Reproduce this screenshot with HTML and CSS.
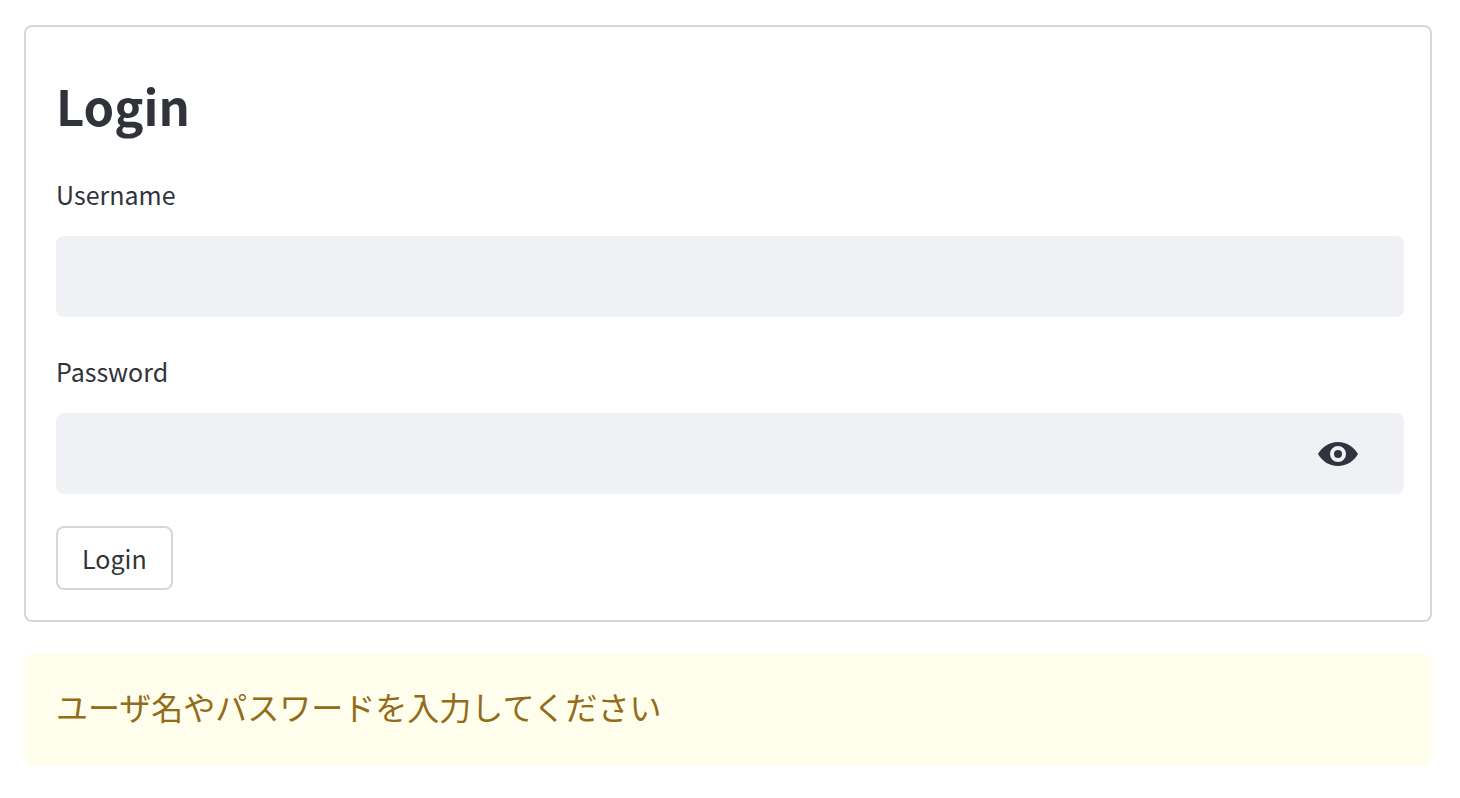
FILE: index.html
```html
<!DOCTYPE html>
<html lang="ja">
<head>
    <meta charset="UTF-8">
    <meta name="viewport" content="width=device-width, initial-scale=1.0">
    <title>Login</title>
    <link rel="stylesheet" href="styles.css">
</head>
<body>
    <main class="page">
        <form class="login">
            <h1 class="title">Login</h1>

            <label class="label" for="username">Username</label>
            <div class="field">
                <input type="text" id="username" name="username" autocomplete="username">
            </div>

            <label class="label" for="password">Password</label>
            <div class="field">
                <input type="password" id="password" name="password" autocomplete="current-password">
                <button type="button" class="eye" id="eye" aria-label="Show password">
                    <svg viewBox="0 0 40 24" width="40" height="24" aria-hidden="true">
                        <path fill="currentColor" fill-rule="evenodd" d="M20 0C11 0 4 5 0 12c4 7 11 12 20 12s16-5 20-12C36 5 29 0 20 0zm0 20a8 8 0 1 1 0-16 8 8 0 0 1 0 16z"/>
                        <circle fill="currentColor" cx="20" cy="12" r="4"/>
                    </svg>
                </button>
            </div>

            <button type="submit" class="submit">Login</button>
        </form>

        <div class="alert" role="alert">
            <p>ユーザ名やパスワードを入力してください</p>
        </div>
    </main>

    <script>
        var password = document.getElementById('password')
        var eye = document.getElementById('eye')

        // toggle the password between hidden and plain text
        eye.onclick = function(){
            password.type = password.type === 'password' ? 'text' : 'password'
        }
    </script>
</body>
</html>
```
FILE: styles.css
```css
*{
    padding: 0;
    margin: 0;
    box-sizing: border-box;
}
body{
    background-color: #fff;
    color: #31333b;
    font-family: "Noto Sans CJK JP", "Noto Sans", sans-serif;
}
.page{
    display: flex;
    flex-direction: column;
    gap: 32px;
    padding: 25px 28px 32px 24px;
}
.login{
    padding: 30px 26px 30px 30px;
    border: 2px solid #d6d6d8;
    border-radius: 8px;
}
.title{
    padding: 16px 0 3px;
    font-size: 49px;
    line-height: 64px;
    font-weight: 700;
}
.label{
    display: block;
    margin: 36px 0 24px;
    font-size: 25px;
    line-height: 36px;
}
.field{
    display: flex;
    height: 81px;
    margin-bottom: 32px;
    background-color: #f0f1f5;
    border-radius: 8px;
    overflow: hidden;
}
.field input{
    flex: 1;
    min-width: 0;
    padding: 0 24px;
    border: none;
    outline: none;
    background: transparent;
    color: inherit;
    font: inherit;
    font-size: 32px;
}
.eye{
    display: flex;
    align-items: center;
    padding: 0 46px 0 16px;
    border: none;
    background: transparent;
    color: #31333f;
    cursor: pointer;
}
.submit{
    display: block;
    padding: 12px 24px;
    border: 2px solid #d6d6d8;
    border-radius: 8px;
    background-color: #fff;
    color: inherit;
    font-family: inherit;
    font-size: 25px;
    line-height: 36px;
    cursor: pointer;
}
.alert{
    padding: 28px 32px 36px;
    border-radius: 8px;
    background-color: #fffdec;
    color: #926c18;
}
.alert p{
    font-size: 32px;
    line-height: 48px;
}
```
